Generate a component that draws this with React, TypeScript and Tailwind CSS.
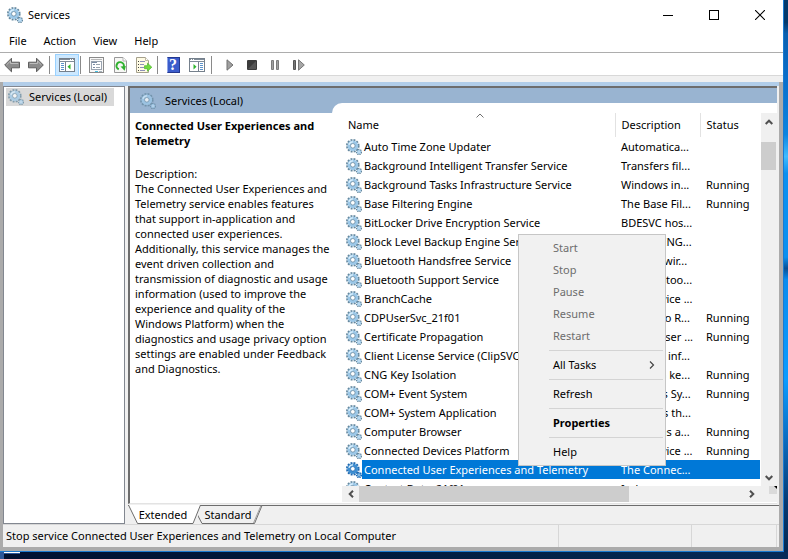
import { useState } from "react";
import type { ReactNode } from "react";

type Service = { name: string; description: string; running?: boolean };

const services: Service[] = [
  { name: "Auto Time Zone Updater", description: "Automatica..." },
  { name: "Background Intelligent Transfer Service", description: "Transfers fil..." },
  { name: "Background Tasks Infrastructure Service", description: "Windows in...", running: true },
  { name: "Base Filtering Engine", description: "The Base Fil...", running: true },
  { name: "BitLocker Drive Encryption Service", description: "BDESVC hos..." },
  { name: "Block Level Backup Engine Service", description: "The WBENG..." },
  { name: "Bluetooth Handsfree Service", description: "Enables wir..." },
  { name: "Bluetooth Support Service", description: "The Bluetoo..." },
  { name: "BranchCache", description: "This service ..." },
  { name: "CDPUserSvc_21f01", description: "<Failed to R...", running: true },
  { name: "Certificate Propagation", description: "Copies user ...", running: true },
  { name: "Client License Service (ClipSVC)", description: "Provides inf..." },
  { name: "CNG Key Isolation", description: "The CNG ke...", running: true },
  { name: "COM+ Event System", description: "Supports Sy...", running: true },
  { name: "COM+ System Application", description: "Manages th..." },
  { name: "Computer Browser", description: "Maintains a...", running: true },
  { name: "Connected Devices Platform", description: "This service ...", running: true },
  { name: "Connected User Experiences and Telemetry", description: "The Connec..." },
  { name: "Contact Data_21f01", description: "Indexes con..." },
];

const selectedName = "Connected User Experiences and Telemetry";

function Gears({ faded = false, selected = false }: { faded?: boolean; selected?: boolean }) {
  const tooth = selected ? "#1f68b0" : "#64889f";
  const body = selected ? "#3f8fd2" : "#9cc8e8";
  return (
    <svg viewBox="0 0 16 16" className={faded ? "size-4 shrink-0 opacity-75" : "size-4 shrink-0"} aria-hidden="true">
      <circle cx="6.8" cy="6.8" r="5.7" fill="none" stroke={tooth} strokeWidth="2.2" strokeDasharray="1.9 1.084" />
      <circle cx="6.8" cy="6.8" r="3.8" fill="#fff" stroke={body} strokeWidth="3" />
      <circle cx="6.8" cy="6.8" r="2.3" fill="#fff" stroke={tooth} strokeWidth="0.8" />
      <path d="M3 6A4 4 0 0 1 7 2.800" fill="none" stroke="#dcf0fc" strokeWidth="1.2" />
      <circle cx="13" cy="13" r="2.3" fill="none" stroke={tooth} strokeWidth="1.8" strokeDasharray="1.15 0.656" />
      <circle cx="13" cy="13" r="1.4" fill="#e6f2fa" stroke={body} strokeWidth="1.2" />
    </svg>
  );
}

function Arrow({ flip = false }: { flip?: boolean }) {
  return (
    <svg viewBox="0 0 16 16" className={flip ? "size-4 -scale-x-100" : "size-4"} aria-hidden="true">
      <path d="M0.700 8 7.500 1.200V5.200H15.500V10.800H7.500V14.800Z" fill="#8c8c8c" stroke="#5f5f5f" strokeLinejoin="round" />
      <path d="M2.600 7.800 6.500 4V6.500H14.200" fill="none" stroke="#bdbdbd" />
    </svg>
  );
}

function PaneIcon({ flip = false }: { flip?: boolean }) {
  return (
    <svg viewBox="0 0 16 14" className={flip ? "h-3.5 w-4 -scale-x-100" : "h-3.5 w-4"} aria-hidden="true">
      <rect x="0.5" y="0.5" width="15" height="13" fill="#fff" stroke="#75808c" />
      <rect x="1" y="1" width="14" height="1" fill="#7f8b98" />
      <rect x="1" y="3" width="14" height="1" fill="#7f8b98" />
      <rect x="11" y="1" width="1" height="1" fill="#fff" />
      <rect x="13" y="1" width="1" height="1" fill="#fff" />
      <path d="M6.500 4V13" stroke="#75808c" />
      <path d="M2 5.500H5M2 7.500H5M2 9.500H5M2 11.500H5" stroke="#5b93cc" />
      <path d="M11.500 6V11.500L8.500 8.750Z" fill="#2eb52e" />
    </svg>
  );
}

function PropertiesIcon() {
  return (
    <svg viewBox="0 0 15 16" className="h-4 w-[15px]" aria-hidden="true">
      <rect x="0.5" y="0.5" width="14" height="15" fill="#f8f8f8" stroke="#8a8a8a" />
      <path d="M2 2.500H13" stroke="#b8b8b8" />
      <rect x="2.500" y="4.500" width="10" height="8" fill="#fff" stroke="#9aa4b0" />
      <path d="M3 5.500H8M4 7.500H6M4 10.500H6" stroke="#7a8ca4" />
      <path d="M7 7.500H11M7 10.500H11" stroke="#9aa4ae" />
      <path d="M6 14.500H9" stroke="#42bde0" />
      <path d="M10 14.500H13" stroke="#a8b4bc" />
    </svg>
  );
}

function RefreshIcon() {
  return (
    <svg viewBox="0 0 13 16" className="h-4 w-[13px]" aria-hidden="true">
      <path d="M0.500 0.500H9L12.500 4V15.500H0.500Z" fill="#f7f7f5" stroke="#989898" />
      <path d="M9 0.500V4H12.500" fill="#fff" stroke="#b4b4b4" />
      <path d="M4.800 12.300A3.700 3.700 0 1 1 9.700 10" fill="none" stroke="#2fb12f" strokeWidth="2" />
      <path d="M6.500 9.500 11.800 9 10.600 13.800Z" fill="#2fb12f" />
    </svg>
  );
}

function ExportIcon() {
  return (
    <svg viewBox="0 0 16 16" className="size-4" aria-hidden="true">
      <path d="M0.500 0.500H9.500L12.500 3.500V15.500H0.500Z" fill="#fffbe4" stroke="#a5a08c" />
      <path d="M9.500 0.500V3.500H12.500" fill="#fff" stroke="#bdb8a4" />
      <path d="M2 4.500H3M2 7.500H3M2 10.500H3M2 13.500H3" stroke="#444" />
      <path d="M4 4.500H9M4 7.500H8M4 10.500H8M4 13.500H9" stroke="#8d90b8" />
      <path d="M8.500 8.700H11.500V6.200L15.800 10.200 11.500 14.200V11.700H8.500Z" fill="#6fdb3c" stroke="#47b32a" strokeWidth="0.7" />
    </svg>
  );
}

function HelpIcon() {
  return (
    <span className="flex h-4 w-[13px] items-center justify-center border border-[#24388f] border-l-[#8fa5e8] bg-[#3b5ccb] font-['Liberation_Serif',serif] text-base leading-none font-bold text-white">
      ?
    </span>
  );
}

function ToolButton({ label, className, children }: { label: string; className: string; children: ReactNode }) {
  return (
    <button type="button" aria-label={label} className={`flex h-[22px] shrink-0 items-center justify-center ${className}`}>
      {children}
    </button>
  );
}

function Divider() {
  return <span className="h-[18px] w-px shrink-0 bg-[#8a8a8a]" />;
}

function Toolbar() {
  return (
    <div className="flex h-[23px] items-center border-b border-[#d8d8d8] pt-px">
      <ToolButton label="Back" className="w-6"><Arrow /></ToolButton>
      <ToolButton label="Forward" className="mr-0.5 w-[23px]"><Arrow flip /></ToolButton>
      <Divider />
      <ToolButton label="Show/Hide Console Tree" className="ml-[5px] w-6 border border-[#99d1ff] bg-[#cce8ff]"><PaneIcon /></ToolButton>
      <span className="w-px" />
      <Divider />
      <ToolButton label="Properties" className="ml-[3px] w-6"><PropertiesIcon /></ToolButton>
      <ToolButton label="Refresh" className="w-6"><RefreshIcon /></ToolButton>
      <ToolButton label="Export List" className="w-6"><ExportIcon /></ToolButton>
      <span className="w-px" />
      <Divider />
      <ToolButton label="Help" className="ml-[3px] w-6"><HelpIcon /></ToolButton>
      <ToolButton label="Show/Hide Action Pane" className="w-6"><PaneIcon flip /></ToolButton>
      <span className="w-0.5" />
      <Divider />
      <ToolButton label="Start Service" className="ml-1.5 w-[23px]">
        <svg viewBox="0 0 8 12" className="h-3 w-2" aria-hidden="true"><path d="M1 0.800 7 6 1 11.200Z" fill="#a0a0a0" stroke="#707070" /></svg>
      </ToolButton>
      <ToolButton label="Stop Service" className="w-[22px]">
        <svg viewBox="0 0 10 10" className="size-2.5" aria-hidden="true"><rect width="10" height="10" rx="1" fill="#3b3b3b" /><path d="M1 9 9 1V9Z" fill="#555" /></svg>
      </ToolButton>
      <ToolButton label="Pause Service" className="w-6">
        <svg viewBox="0 0 8 10" className="h-2.5 w-2" aria-hidden="true"><path d="M0.500 0.500H2.500V9.500H0.500ZM5.500 0.500H7.500V9.500H5.500Z" fill="#a0a0a0" stroke="#7c7c7c" /></svg>
      </ToolButton>
      <ToolButton label="Restart Service" className="w-6">
        <svg viewBox="0 0 12 12" className="size-3" aria-hidden="true"><path d="M0.500 1.500H2.500V10.500H0.500Z" fill="#777" stroke="#555" /><path d="M5.500 0.800 11.300 6 5.500 11.200Z" fill="#a6a6a6" stroke="#777" /></svg>
      </ToolButton>
    </div>
  );
}

function TitleBar() {
  return (
    <header className="flex h-[29px] items-center pl-[7px]">
      <Gears />
      <h1 className="ml-[5px] flex-1">Services</h1>
      <button type="button" aria-label="Minimize" className="flex h-full w-[46px] items-center justify-center">
        <svg viewBox="0 0 10 10" className="size-2.5"><path d="M0 5.500H10" stroke="#000" /></svg>
      </button>
      <button type="button" aria-label="Maximize" className="flex h-full w-[46px] items-center justify-center">
        <svg viewBox="0 0 10 10" className="size-2.5"><rect x="0.500" y="0.500" width="9" height="9" fill="none" stroke="#000" /></svg>
      </button>
      <button type="button" aria-label="Close" className="flex h-full w-[46px] items-center justify-center">
        <svg viewBox="0 0 10 10" className="size-2.5"><path d="M0 0 10 10M10 0 0 10" stroke="#000" strokeWidth="1.1" /></svg>
      </button>
    </header>
  );
}

function Chevron({ className }: { className: string }) {
  return (
    <svg viewBox="0 0 8 8" className={`size-2 ${className}`} aria-hidden="true">
      <path d="M0.700 6 4 2.700 7.300 6" fill="none" stroke="#505050" strokeWidth="2" />
    </svg>
  );
}

function ServiceTable() {
  return (
    <table className="w-full table-fixed border-collapse text-left whitespace-nowrap">
      <colgroup>
        <col />
        <col className="w-[85px]" />
        <col className="w-[60px]" />
      </colgroup>
      <thead>
        <tr className="h-6">
          <th scope="col" className="relative border-r border-[#e2e2e2] p-0 pl-0.5 font-normal" aria-sort="ascending">
            Name
            <svg viewBox="0 0 8 5" className="absolute top-0 left-1/2 h-[5px] w-2 -translate-x-1/2" aria-hidden="true">
              <path d="M0.500 4.500 4 1 7.500 4.500" fill="none" stroke="#707070" />
            </svg>
          </th>
          <th scope="col" className="border-r border-[#e2e2e2] p-0 pl-1.5 font-normal">Description</th>
          <th scope="col" className="p-0 pl-1.5 font-normal">Status</th>
        </tr>
      </thead>
      <tbody>
        {services.map((s) => {
          const selected = s.name === selectedName;
          return (
            <tr key={s.name} className={selected ? "h-[19px] text-white" : "h-[19px]"} aria-selected={selected}>
              <td className="p-0">
                <span className="flex h-[19px] items-center">
                  <Gears selected={selected} />
                  <span className={selected ? "flex h-full flex-1 items-center bg-[#0078d7] pl-0.5" : "flex h-full flex-1 items-center pl-0.5"}>{s.name}</span>
                </span>
              </td>
              <td className={selected ? "bg-[#0078d7] p-0 pl-1.5" : "p-0 pl-1.5"}>{s.description}</td>
              <td className={selected ? "bg-[#0078d7] p-0 pl-1.5" : "p-0 pl-1.5"}>{s.running ? "Running" : ""}</td>
            </tr>
          );
        })}
      </tbody>
    </table>
  );
}

function VerticalScrollbar() {
  return (
    <div className="flex w-4 shrink-0 flex-col bg-[#f0f0f0]">
      <button type="button" aria-label="Scroll up" className="flex h-[29px] items-start justify-center pt-[5px]"><Chevron className="" /></button>
      <div className="mr-px h-7 bg-[#cdcdcd]" />
      <div className="flex-1" />
      <button type="button" aria-label="Scroll down" className="flex h-4 items-center justify-center"><Chevron className="rotate-180" /></button>
    </div>
  );
}

function HorizontalScrollbar() {
  return (
    <div className="flex h-4 shrink-0 bg-[#f0f0f0]">
      <button type="button" aria-label="Scroll left" className="flex w-[17px] items-center justify-center"><Chevron className="-rotate-90" /></button>
      <div className="w-[270px] bg-[#cdcdcd]" />
      <div className="flex-1" />
      <button type="button" aria-label="Scroll right" className="flex w-[17px] items-center justify-center"><Chevron className="rotate-90" /></button>
      <div className="flex w-[17px] justify-end">
        <svg viewBox="0 0 8 8" className="size-2 bg-[#dadada]" aria-hidden="true"><path d="M5 0H8V3Z" fill="#000" /></svg>
      </div>
    </div>
  );
}

function Tabs() {
  return (
    <div role="tablist" className="flex h-[19px] border-t border-[#6d6d6d]">
      <button type="button" role="tab" aria-selected="true" className="relative -mt-px h-[19px] w-[70px]">
        <svg viewBox="0 0 74 19" className="absolute top-0 left-0 h-[19px] w-[74px]" aria-hidden="true">
          <path d="M0.500 0 9.500 18.500H65L72.500 0" fill="#fff" stroke="#6d6d6d" />
        </svg>
        <span className="relative">Extended</span>
      </button>
      <button type="button" role="tab" aria-selected="false" className="relative -mt-px h-[19px] w-[60px]">
        <svg viewBox="0 0 68 19" className="absolute top-0 left-0 h-[19px] w-[68px]" aria-hidden="true">
          <path d="M-1 9 4 18.500H56.500L64 0.500" fill="none" stroke="#6d6d6d" />
          <path d="M55.500 18 63 0.500" stroke="#a0a0a0" />
        </svg>
        <span className="relative">Standard</span>
      </button>
    </div>
  );
}

const menuGroups: { label: string; disabled?: boolean; bold?: boolean; submenu?: boolean }[][] = [
  [
    { label: "Start", disabled: true },
    { label: "Stop", disabled: true },
    { label: "Pause", disabled: true },
    { label: "Resume", disabled: true },
    { label: "Restart", disabled: true },
  ],
  [{ label: "All Tasks", submenu: true }],
  [{ label: "Refresh" }],
  [{ label: "Properties", bold: true }],
  [{ label: "Help" }],
];

function ContextMenu() {
  return (
    <div role="menu" className="absolute top-[234px] left-[518px] w-[148px] border border-[#c6c6c6] bg-[#f1f1f1] py-0.5">
      {menuGroups.map((group, i) => (
        <div key={group[0].label}>
          {i > 0 && <div className="my-[3px] mr-0.5 ml-[30px] h-px bg-[#d4d4d4]" />}
          {group.map((item) => (
            <button
              key={item.label}
              type="button"
              role="menuitem"
              disabled={item.disabled}
              className={`flex h-[22px] w-full items-center justify-between pr-2.5 pl-[34px] ${item.disabled ? "text-[#6d6d6d]" : "text-black"} ${item.bold ? "font-bold" : ""}`}
            >
              {item.label}
              {item.submenu && (
                <svg viewBox="0 0 6 8" className="h-2 w-1.5" aria-hidden="true"><path d="M1 0.500 4.500 4 1 7.500" fill="none" stroke="#444" strokeWidth="1.2" /></svg>
              )}
            </button>
          ))}
        </div>
      ))}
    </div>
  );
}

function DetailsPane() {
  return (
    <section className="w-[207px] shrink-0 pt-[5px] pr-1 pl-[5px] leading-[15px]">
      <h2 className="font-bold">{selectedName}</h2>
      <p className="mt-[18px]">Description:</p>
      <p>
        The Connected User Experiences and Telemetry service enables features that support in-application and
        connected user experiences. Additionally, this service manages the event driven collection and transmission
        of diagnostic and usage information (used to improve the experience and quality of the Windows Platform)
        when the diagnostics and usage privacy option settings are enabled under Feedback and Diagnostics.
      </p>
    </section>
  );
}

export default function App() {
  const [menuOpen] = useState(true);
  return (
    <div className="relative h-screen overflow-hidden bg-[linear-gradient(180deg,#04396b_0%,#04396b_4%,#0a5fae_6%,#0a6fcb_14%,#0a84e0_24%,#3fbcff_28%,#0a90f0_31%,#0a90f0_46%,#084f94_48%,#0a8cee_50%,#0a9cff_68%,#0a6fc4_78%,#063a72_90%,#04254c_100%)] font-['Noto_Sans','Open_Sans',sans-serif] text-[11px] leading-4 text-black">
      <div className="flex h-full flex-col bg-[linear-gradient(90deg,#001030,#001a3c_45%,#062b57)] bg-[length:100%_7px] bg-bottom bg-no-repeat pr-1 pb-[7px]">
        <div className="flex min-h-0 flex-1 flex-col border-r border-b border-[#1a7ad0] bg-white">
          <TitleBar />
          <nav className="flex h-6 items-center gap-px border-b border-[#adadad] pl-px">
            {["File", "Action", "View", "Help"].map((m) => (
              <button key={m} type="button" className="px-2">{m}</button>
            ))}
          </nav>
          <Toolbar />
          <div className="h-1.5 bg-[#f0f0f0]" />
          <div className="flex min-h-0 flex-1 flex-col border-r-4 border-b-4 border-l-[3px] border-[#ababab] bg-[#f0f0f0]">
            <div className="h-1 bg-[#b1cde9]" />
            <main className="flex min-h-0 flex-1">
              <aside className="w-[122px] shrink-0 border border-[#828790] bg-white pt-px pl-0.5">
                <button type="button" className="flex h-[18px] w-[108px] items-center gap-[5px] bg-[#d9d9d9] pl-0.5 whitespace-nowrap">
                  <Gears faded />
                  Services (Local)
                </button>
              </aside>
              <div className="ml-[3px] flex min-w-0 flex-1 flex-col">
                <div className="mr-0.5 flex min-h-0 flex-1 flex-col border-t-2 border-b border-l-2 border-t-[#6d6d6d] border-b-[#e3e3e3] border-l-[#6d6d6d] bg-white">
                  <div className="relative flex h-[25px] shrink-0 items-center bg-[#99b4d1] pl-2.5">
                    <Gears faded />
                    <span className="ml-[9px]">Services (Local)</span>
                    <span className="absolute right-0 bottom-0 left-[202px] h-2.5 rounded-tl-[10px] bg-white" />
                  </div>
                  <div className="flex min-h-0 flex-1">
                    <DetailsPane />
                    <div className="ml-[5px] flex min-w-0 flex-1 flex-col pb-px">
                      <div className="flex min-h-0 flex-1">
                        <div className="mr-px min-w-0 flex-1 overflow-hidden pl-1">
                          <ServiceTable />
                        </div>
                        <VerticalScrollbar />
                      </div>
                      <HorizontalScrollbar />
                    </div>
                  </div>
                </div>
                <div className="h-px" />
                <Tabs />
              </div>
            </main>
            <footer className="flex h-[23px] shrink-0 border-t border-[#d7d7d7]">
              <p className="flex flex-1 items-center border-r border-[#d7d7d7] pl-[3px] whitespace-nowrap">
                Stop service Connected User Experiences and Telemetry on Local Computer
              </p>
              <span className="w-[133px] border-r border-[#d7d7d7]" />
              <span className="mr-0.5 w-[85px] border-r border-[#d7d7d7]" />
            </footer>
          </div>
        </div>
      </div>
      <div className="absolute bottom-0 left-0 h-[7px] w-1 bg-[#2b579a]" />
      <div className="absolute bottom-[5px] left-1 h-0.5 w-4 border-b border-[#2b579a] bg-white" />
      {menuOpen && <ContextMenu />}
    </div>
  );
}
